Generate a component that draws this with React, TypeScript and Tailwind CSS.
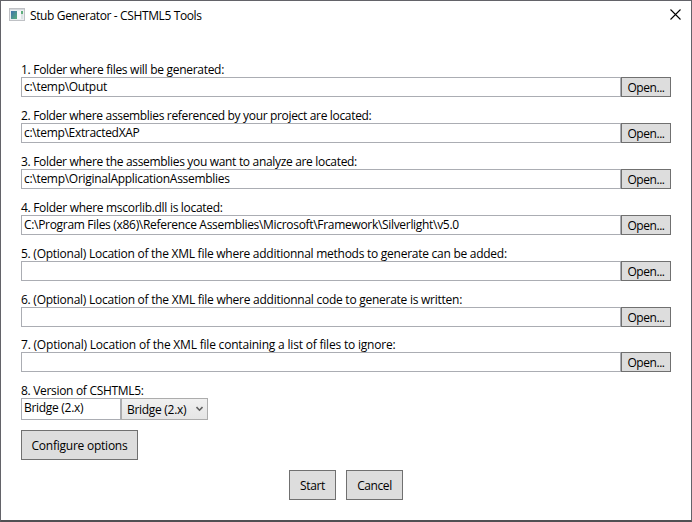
type PathField = {
  label: string;
  labelClass: string;
  value: string;
  valueClass: string;
  gap: string;
};

const fields: PathField[] = [
  { label: "1. Folder where files will be generated:", labelClass: "tracking-[-0.29px]", value: "c:\\temp\\Output", valueClass: "tracking-[-0.3px]", gap: "mb-2.5" },
  { label: "2. Folder where assemblies referenced by your project are located:", labelClass: "tracking-[-0.33px]", value: "c:\\temp\\ExtractedXAP", valueClass: "tracking-[-0.32px]", gap: "mb-2.5" },
  { label: "3. Folder where the assemblies you want to analyze are located:", labelClass: "tracking-[-0.32px]", value: "c:\\temp\\OriginalApplicationAssemblies", valueClass: "tracking-[-0.29px]", gap: "mb-2.5" },
  { label: "4. Folder where mscorlib.dll is located:", labelClass: "tracking-[-0.3px]", value: "C:\\Program Files (x86)\\Reference Assemblies\\Microsoft\\Framework\\Silverlight\\v5.0", valueClass: "tracking-[-0.31px]", gap: "mb-2.5" },
  { label: "5. (Optional) Location of the XML file where additionnal methods to generate can be added:", labelClass: "tracking-[-0.26px]", value: "", valueClass: "", gap: "mb-2.5" },
  { label: "6. (Optional) Location of the XML file where additionnal code to generate is written:", labelClass: "tracking-[-0.255px]", value: "", valueClass: "", gap: "mb-[9px]" },
  { label: "7. (Optional) Location of the XML file containing a list of files to ignore:", labelClass: "tracking-[-0.2px]", value: "", valueClass: "", gap: "mb-2.5" },
];

const button = "flex shrink-0 items-center justify-center border border-[#707070] bg-[#dddddd] whitespace-nowrap";
const label = "h-4 pt-px leading-4 whitespace-nowrap";

function WindowIcon() {
  return (
    <svg className="mb-0.5" width="16" height="14" viewBox="0 0 16 14" shapeRendering="crispEdges">
      <defs>
        <linearGradient id="pane" x1="0" y1="0" x2="1" y2="1">
          <stop offset="0" stopColor="#3f70ae" />
          <stop offset="1" stopColor="#5bb07a" />
        </linearGradient>
      </defs>
      <rect x="0.5" y="0.5" width="15" height="12" fill="#eceef1" stroke="#bfc1c5" />
      <rect x="1" y="1" width="14" height="1" fill="#d5d8dc" />
      <rect x="2" y="3" width="6" height="8" fill="url(#pane)" />
      <rect x="8" y="3" width="4" height="8" fill="#f8f8fb" />
      <rect x="12" y="3" width="2" height="3" fill="#5fae7c" />
      <rect x="12" y="6" width="2" height="5" fill="#dbe3e4" />
    </svg>
  );
}

export default function App() {
  return (
    <div className="flex h-[522px] w-[692px] flex-col border border-b-2 border-[#636369] border-b-[#505053] bg-white font-['Open_Sans','Noto_Sans',sans-serif] text-[12px] text-black">
      <header className="flex h-[30px] shrink-0 items-center pl-2 pr-2.5">
        <WindowIcon />
        <h1 className="ml-[5px] flex-1 whitespace-nowrap tracking-[-0.37px]">Stub Generator - CSHTML5 Tools</h1>
        <button aria-label="Close" className="mb-[3px]">
          <svg width="11" height="11" viewBox="0 0 11 11" fill="none" stroke="#000" strokeWidth="1.1">
            <path d="M.5.5l10 10M10.5.5l-10 10" />
          </svg>
        </button>
      </header>
      <main className="flex flex-col pl-5 pr-5 pt-[30px]">
        {fields.map((f) => (
          <section key={f.label} className={f.gap}>
            <div className={`${label} ${f.labelClass}`}>{f.label}</div>
            <div className="flex h-5">
              <div className={`flex-1 border border-[#abadb3] pl-0.5 leading-[17px] whitespace-nowrap ${f.valueClass}`}>{f.value}</div>
              <button className={`${button} w-[50px] pt-0.5 tracking-[-0.45px]`}>Open...</button>
            </div>
          </section>
        ))}
        <div className={`${label} tracking-[-0.31px]`}>8. Version of CSHTML5:</div>
        <div className="flex h-[22px] tracking-[-0.29px]">
          <div className="w-[100px] border border-[#abadb3] pl-0.5 leading-[17px]">Bridge (2.x)</div>
          <div className="flex w-[87px] items-center justify-between border border-[#acacac] bg-linear-to-b from-[#f0f0f0] to-[#e5e5e5] pl-[5px] pr-[4px] pt-px">
            Bridge (2.x)
            <svg className="mb-0.5" width="7" height="6" viewBox="0 0 7 6" fill="none" stroke="#606060" strokeWidth="1.6">
              <path d="M.5 1l3 3.2L6.5 1" />
            </svg>
          </div>
        </div>
        <button className={`${button} mt-2.5 h-[30px] w-[117px] pt-0.5 tracking-[-0.24px]`}>Configure options</button>
        <div className="mt-2.5 flex gap-2.5 pl-[268px]">
          <button className={`${button} h-[30px] w-[47px] pt-0.5 tracking-[-0.35px]`}>Start</button>
          <button className={`${button} h-[30px] w-[57px] pt-0.5 tracking-[-0.4px]`}>Cancel</button>
        </div>
      </main>
    </div>
  );
}
